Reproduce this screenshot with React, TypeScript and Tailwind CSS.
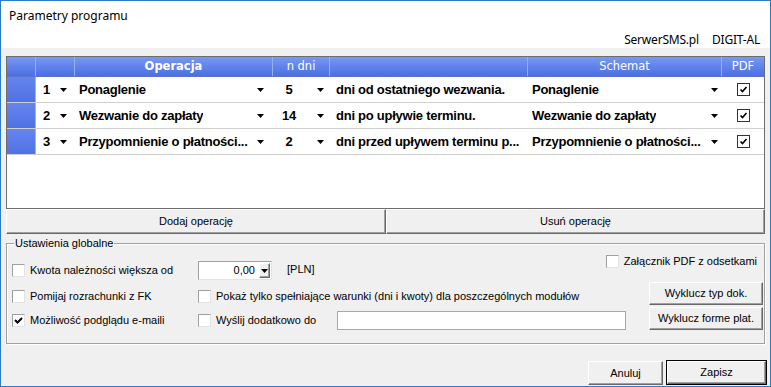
import React from 'react'

const ui = "font-['Liberation_Sans',Arial,sans-serif]"

const Arrow = () => (
  <svg width="7" height="4" viewBox="0 0 7 4" className="shrink-0">
    <path d="M0 0h7L3.5 4z" fill="#000" />
  </svg>
)

const GridCheck = () => (
  <div className="w-[13px] h-[13px] border border-[#333] bg-white flex items-center justify-center">
    <svg width="11" height="11" viewBox="0 0 11 11">
      <path d="M2.5 5.5l2 2L8.5 3" stroke="#000" strokeWidth="1.7" fill="none" />
    </svg>
  </div>
)

const Check = ({ checked = false }: { checked?: boolean }) => (
  <div className="w-[13px] h-[13px] shrink-0 bg-white border border-t-[#a0a0a0] border-l-[#a0a0a0] border-r-[#e3e3e3] border-b-[#e3e3e3] flex items-center justify-center">
    {checked && (
      <svg width="11" height="11" viewBox="0 0 11 11">
        <path d="M2 5l2.5 2.5L9 3" stroke="#000" strokeWidth="2" fill="none" />
      </svg>
    )}
  </div>
)

const Btn = ({ children, className = '' }: { children: React.ReactNode; className?: string }) => (
  <div
    className={`bg-[#f0f0f0] border border-t-white border-l-white border-r-[#696969] border-b-[#696969] shadow-[inset_-1px_-1px_0_#a0a0a0] flex items-center justify-center ${className}`}
  >
    {children}
  </div>
)

const rows = [
  { n: '1', op: 'Ponaglenie', d: '5', desc: 'dni od ostatniego wezwania.', sch: 'Ponaglenie' },
  { n: '2', op: 'Wezwanie do zapłaty', d: '14', desc: 'dni po upływie terminu.', sch: 'Wezwanie do zapłaty' },
  { n: '3', op: 'Przypomnienie o płatności...', d: '2', desc: 'dni przed upływem terminu p...', sch: 'Przypomnienie o płatności...' },
]

export default function App() {
  return (
    <div className={`w-[771px] h-[387px] flex flex-col bg-[#f0f0f0] border border-[#2a7cc7] text-[11px] text-black overflow-hidden ${ui}`}>
      {/* nagłówek okna */}
      <div className="bg-white h-[47px] flex flex-col justify-between px-[8px] pt-[6px] font-['Noto_Sans',sans-serif] text-[12px] leading-[17px]">
        <span>Parametry programu</span>
        <div className="flex justify-end gap-[13px] pr-[2px] tracking-[-0.2px]">
          <span>SerwerSMS.pl</span>
          <span>DIGIT-AL</span>
        </div>
      </div>
      <div className="h-[8px] shrink-0" />

      {/* tabela operacji */}
      <div className="mx-[5px] h-[153px] shrink-0 border border-[#6d6d6d] bg-white flex flex-col">
        <div className="h-[20px] flex bg-gradient-to-b from-[#7898f3] to-[#4b6fe2] text-white text-[11.5px] font-['DejaVu_Sans',sans-serif] border-b border-[#5b73c9]">
          <div className="w-[29px] border-r border-[#97aef3]" />
          <div className="w-[39px] border-r border-[#97aef3]" />
          <div className="w-[198px] border-r border-[#97aef3] flex items-center justify-center font-bold">Operacja</div>
          <div className="w-[57px] border-r border-[#97aef3] flex items-center justify-center">n dni</div>
          <div className="w-[198px] border-r border-[#97aef3]" />
          <div className="w-[194px] border-r border-[#97aef3] flex items-center justify-center">Schemat</div>
          <div className="flex-1 flex items-center justify-center">PDF</div>
        </div>
        {rows.map((r) => (
          <div key={r.n} className="h-[26px] flex border-b border-[#cfcfcf] text-[13px] font-bold tracking-[-0.25px] whitespace-nowrap">
            <div className="w-[29px] bg-gradient-to-b from-[#6584ee] to-[#4f72e4] border-r border-[#9fb2ee]" />
            <div className="w-[39px] flex items-center pl-[7px]">
              <span className="w-[17px]">{r.n}</span>
              <Arrow />
            </div>
            <div className="w-[198px] flex items-center justify-between pl-[4px] pr-[9px] overflow-hidden">
              <span className="overflow-hidden">{r.op}</span>
              <Arrow />
            </div>
            <div className="w-[57px] flex items-center">
              <span className="w-[32px] text-center">{r.d}</span>
              <span className="ml-[12px]">
                <Arrow />
              </span>
            </div>
            <div className="w-[198px] flex items-center pl-[6px] overflow-hidden">{r.desc}</div>
            <div className="w-[194px] flex items-center justify-between pl-[4px] pr-[4px] overflow-hidden">
              <span className="overflow-hidden">{r.sch}</span>
              <Arrow />
            </div>
            <div className="flex-1 flex items-center justify-center">
              <GridCheck />
            </div>
          </div>
        ))}
      </div>

      <div className="mx-[5px] h-[25px] shrink-0 flex">
        <Btn className="w-[380px]">Dodaj operację</Btn>
        <Btn className="flex-1">Usuń operację</Btn>
      </div>

      {/* ustawienia globalne */}
      <div className="relative mx-[5px] mt-[9px] h-[101px] shrink-0 border border-[#a0a0a0] shadow-[inset_1px_1px_0_#fff,1px_1px_0_#fff] pl-[5px] pr-[1px]">
        <span className="absolute left-[7px] top-[-8px] px-[1px] bg-[#f0f0f0] leading-[14px]">Ustawienia globalne</span>

        <div className="h-[37px] flex justify-between">
          <div className="flex items-center mt-[17px] h-[19px]">
            <div className="w-[186px] flex items-center gap-[5px]">
              <Check />
              <span>Kwota należności większa od</span>
            </div>
            <div className="w-[74px] h-[19px] bg-white border border-t-[#a0a0a0] border-l-[#a0a0a0] border-r-[#e3e3e3] border-b-[#e3e3e3] flex items-center justify-end pr-[1px]">
              <span className="mr-[4px]">0,00</span>
              <Btn className="w-[11px] h-[15px]">
                <Arrow />
              </Btn>
            </div>
            <span className="ml-[15px] -mt-[3px]">[PLN]</span>
          </div>
          <div className="flex items-center gap-[5px] mt-[11px] h-[13px] pr-[6px]">
            <Check />
            <span>Załącznik PDF z odsetkami</span>
          </div>
        </div>

        <div className="h-[25px] flex justify-between">
          <div className="flex items-center mt-[9px] h-[13px]">
            <div className="w-[186px] flex items-center gap-[5px]">
              <Check />
              <span>Pomijaj rozrachunki z FK</span>
            </div>
            <div className="flex items-center gap-[5px]">
              <Check />
              <span>Pokaż tylko spełniające warunki (dni i kwoty) dla poszczególnych modułów</span>
            </div>
          </div>
          <Btn className="w-[114px] h-[23px] mt-[1px]">Wyklucz typ dok.</Btn>
        </div>

        <div className="h-[25px] flex justify-between">
          <div className="flex items-center mt-[5px] h-[19px]">
            <div className="w-[186px] flex items-center gap-[5px]">
              <Check checked />
              <span>Możliwość podglądu e-maili</span>
            </div>
            <div className="w-[139px] flex items-center gap-[5px]">
              <Check />
              <span>Wyślij dodatkowo do</span>
            </div>
            <div className="w-[289px] h-[19px] bg-white border border-[#a8a8a8]" />
          </div>
          <Btn className="w-[114px] h-[23px] mt-[1px]">Wyklucz forme plat.</Btn>
        </div>
      </div>

      <div className="flex-1 flex justify-end items-end gap-[3px] pr-[3px] pb-[1px]">
        <Btn className="w-[75px] h-[24px]">Anuluj</Btn>
        <div className="w-[101px] h-[25px] border border-black flex">
          <Btn className="flex-1">Zapisz</Btn>
        </div>
      </div>
    </div>
  )
}
